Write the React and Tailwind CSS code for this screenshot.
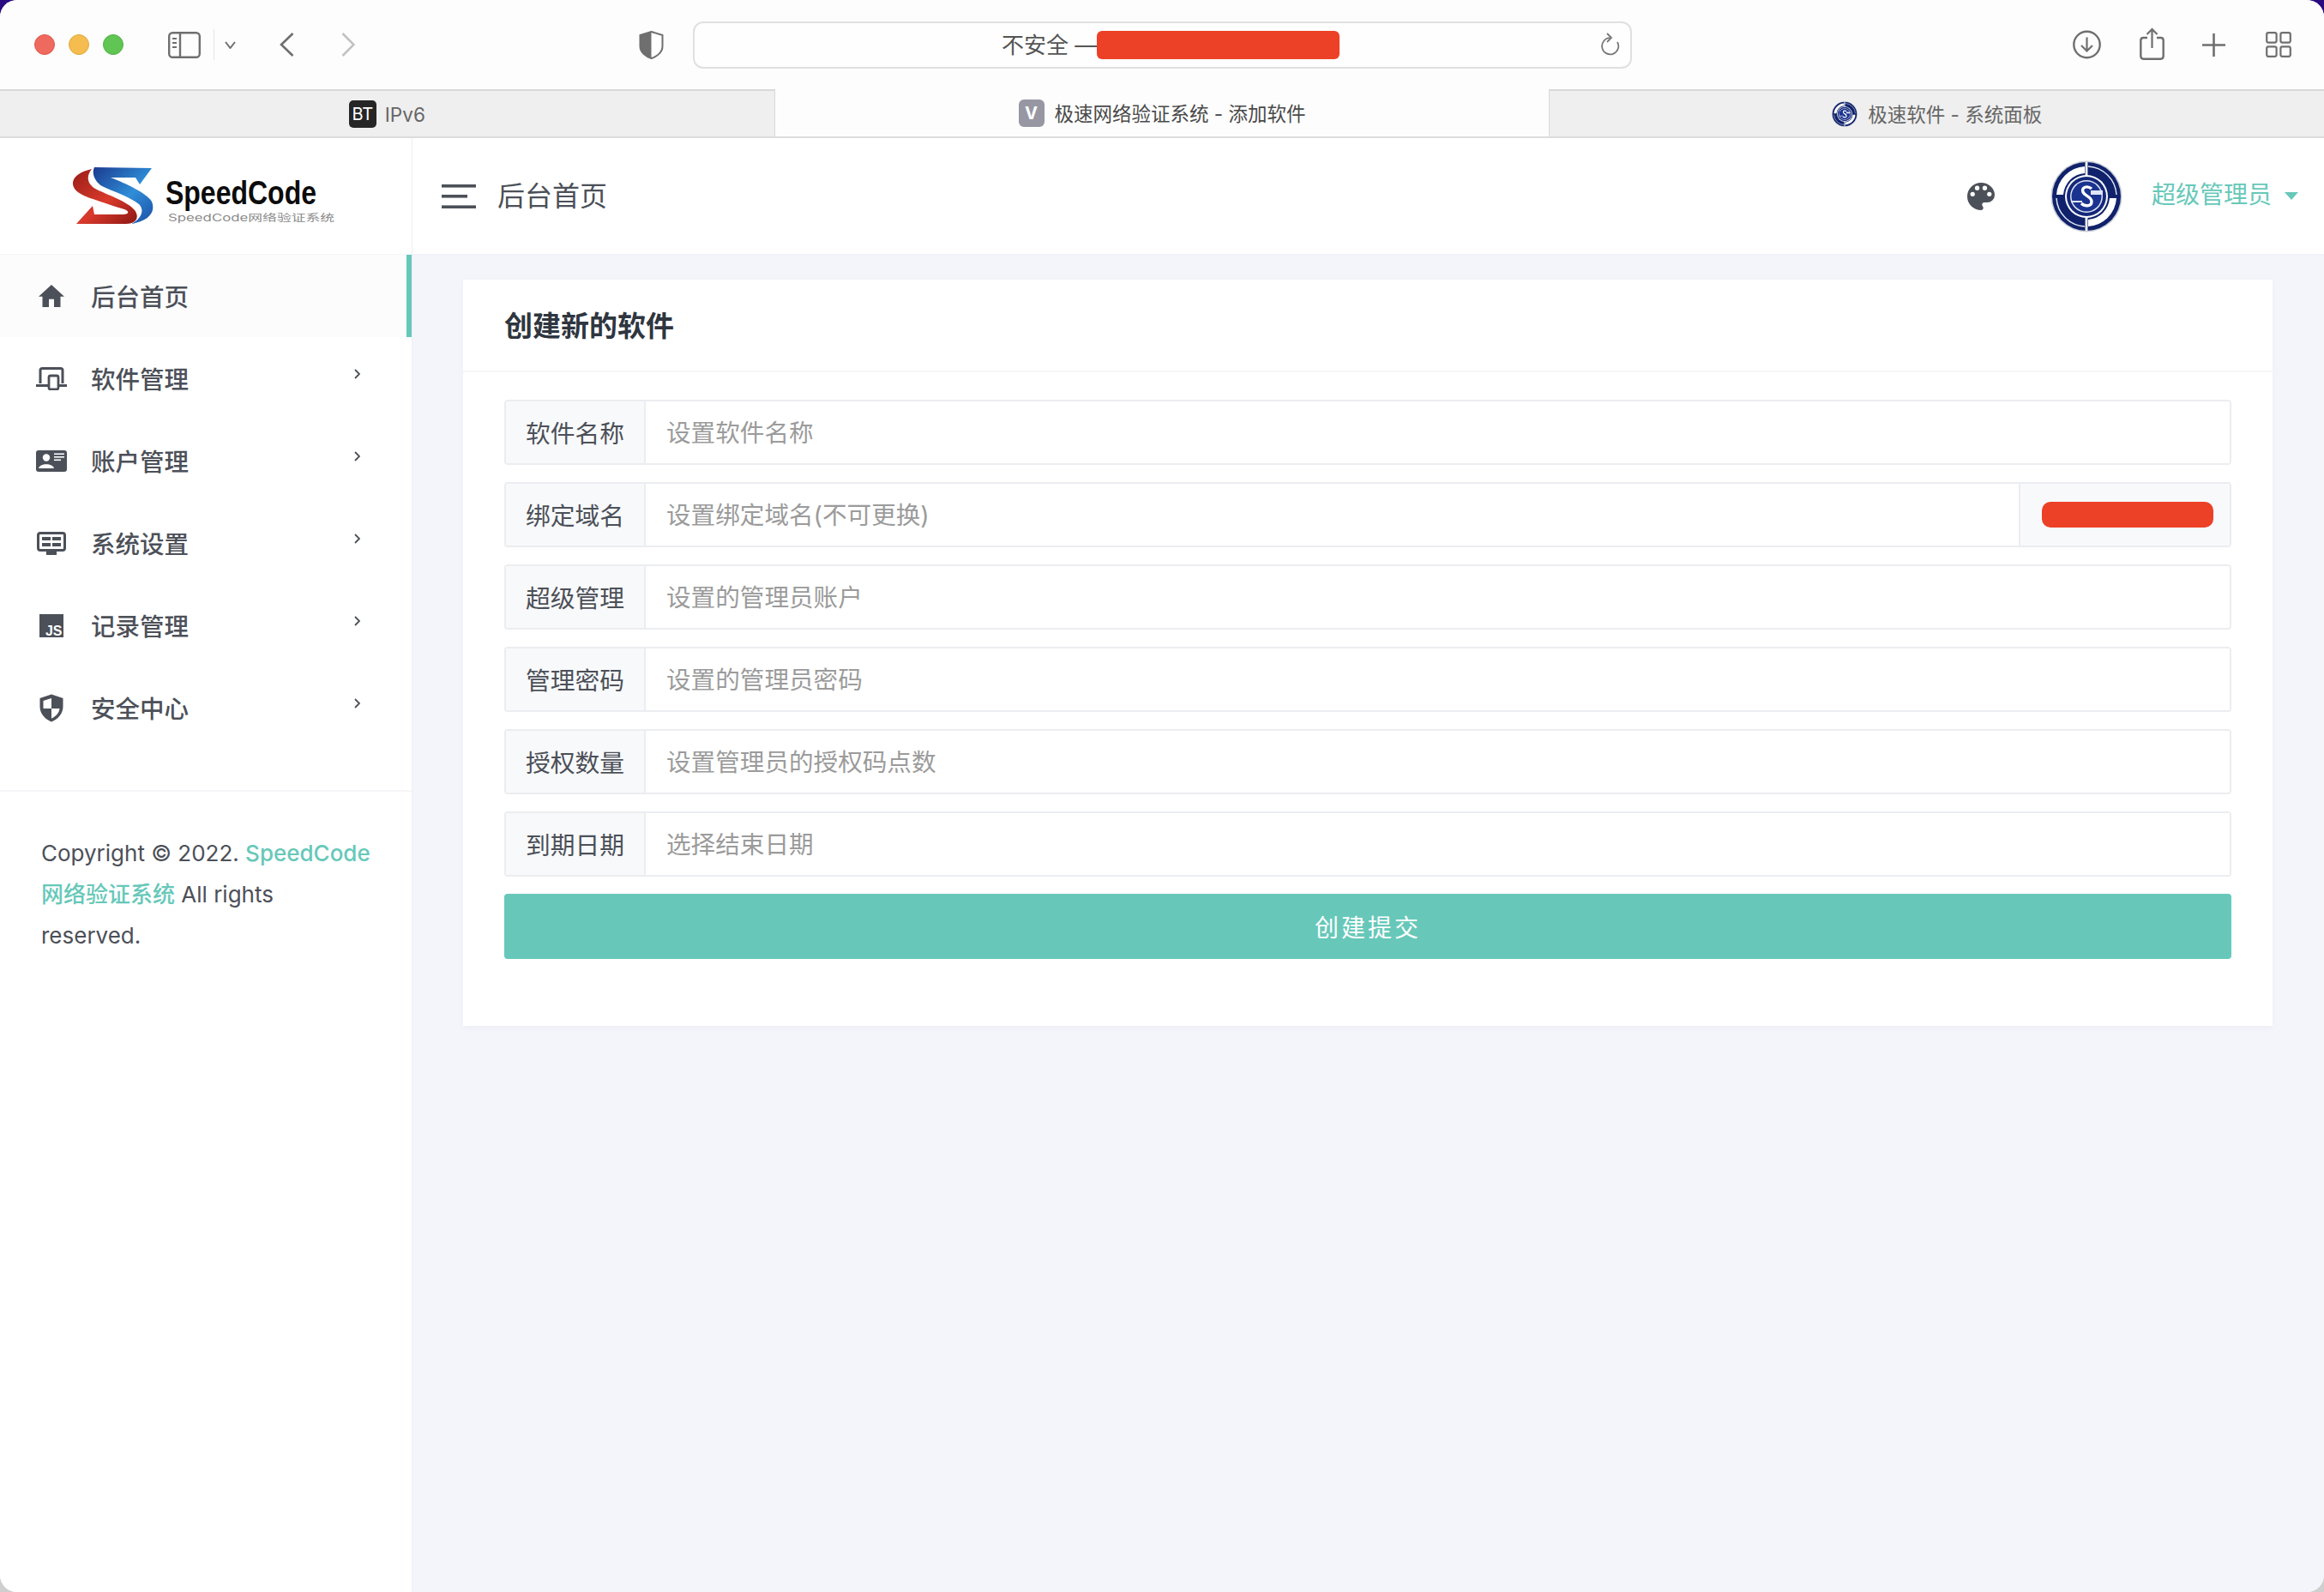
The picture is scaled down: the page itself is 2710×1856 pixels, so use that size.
import React from 'react';

const Logo = () => (
    <svg width="305" height="70" viewBox="0 0 305 70" className="block">
        <defs>
            <linearGradient id="blueS" x1="0" y1="0" x2="1" y2="1">
                <stop offset="0" stopColor="#1b3a8f" />
                <stop offset="0.55" stopColor="#2f8ed8" />
                <stop offset="1" stopColor="#1c4fa6" />
            </linearGradient>
            <linearGradient id="redS" x1="0" y1="0" x2="1" y2="1">
                <stop offset="0" stopColor="#9a1d17" />
                <stop offset="0.55" stopColor="#d93a2c" />
                <stop offset="1" stopColor="#8d1712" />
            </linearGradient>
        </defs>
        <path fill="url(#redS)" d="M22,2 C9,5 -1,11 0,20 C1,28 10,32 20,36 C35,41 50,46 60,49 C66,51 66,55 58,55 L25,55 L23,45 L4,66 L62,66 C74,66 78,58 72,50 C64,40 40,32 28,26 C18,21 14,12 22,2 Z" />
        <path fill="url(#blueS)" d="M25,0 L92,1 L78,20 L73,12 L44,12 C62,19 86,30 92,40 C97,52 88,63 68,66 C80,60 84,50 77,43 C66,34 44,27 34,22 C27,18 21,8 25,0 Z" />
        <text x="108" y="35.2" transform="scale(1 1.22)" fontFamily="'Liberation Sans', sans-serif" fontWeight="700" fontSize="32" fill="#0c0c0c">SpeedCode</text>
        <text x="111" y="92.6" transform="scale(1 0.68)" fontFamily="Inter, 'Noto Sans CJK SC', sans-serif" fontSize="16.8" fill="#8a8a8a">SpeedCode网络验证系统</text>
    </svg>
);

const Avatar = ({ size }) => (
    <svg width={size} height={size} viewBox="0 0 84 84" className="block shrink-0">
        <circle cx="42" cy="42" r="41.5" fill="#c9ccd6" />
        <circle cx="42" cy="42" r="40" fill="#10226b" />
        <path d="M40,7 A35,35 0 0 0 7,40 H15 A27,27 0 0 1 40,15 Z" fill="#fff" />
        <path d="M44,77 A35,35 0 0 0 77,44 H69 A27,27 0 0 1 44,69 Z" fill="#fff" />
        <path d="M44,7 A35,35 0 0 1 77,40" fill="none" stroke="#dfe4f2" strokeWidth="1.5" />
        <path d="M40,77 A35,35 0 0 1 7,44" fill="none" stroke="#dfe4f2" strokeWidth="1.5" />
        <rect x="40.6" y="2" width="2.8" height="80" fill="#fff" />
        <circle cx="42" cy="42" r="25" fill="#fff" />
        <circle cx="42" cy="42" r="23" fill="#14287a" />
        <circle cx="42" cy="42" r="19" fill="#dfe5f3" />
        <circle cx="42" cy="42" r="17.5" fill="#1a3390" />
        <rect x="24" y="47" width="13" height="2" fill="#dfe5f3" />
        <rect x="47" y="35" width="14" height="5" fill="#dfe5f3" />
        <path d="M48,33 C43,29 36,31 38,37 C40,42 48,42 48,48 C48,54 40,54 36,50" stroke="#fff" strokeWidth="3.4" fill="none" />
    </svg>
);

const Shield = () => (
    <svg width="29" height="33" viewBox="0 0 29 33" className="block shrink-0">
        <path d="M14.5,1 L27.5,5 V18 C27.5,25 21,30 14.5,32 C8,30 1.5,25 1.5,18 V5 Z" fill="#fff" stroke="#6f6f6f" strokeWidth="2" />
        <path d="M14.5,1 V32 C8,30 1.5,25 1.5,18 V5 Z" fill="#6f6f6f" />
    </svg>
);

const NavIcon = ({ name }) => {
    if (name === 'home') {
        return (
            <svg width="30" height="26" viewBox="2 3 20 17" fill="#4c5058" preserveAspectRatio="none">
                <path d="M10,20V14H14V20H19V12H22L12,3L2,12H5V20H10Z" />
            </svg>
        );
    }
    if (name === 'devices') {
        return (
            <svg width="36" height="27" viewBox="0 0 36 27" fill="none">
                <path d="M5,19 V3.5 C5,2 6,1.5 7.5,1.5 H28.5 C30,1.5 31,2 31,3.5 V19" stroke="#4c5058" strokeWidth="3" />
                <rect x="0" y="20" width="36" height="3" fill="#4c5058" />
                <rect x="15" y="10" width="11" height="16" rx="2" fill="#fff" stroke="#4c5058" strokeWidth="2.8" />
            </svg>
        );
    }
    if (name === 'card') {
        return (
            <svg width="36" height="27" viewBox="0 0 36 27">
                <rect width="36" height="25" y="1" rx="3" fill="#4c5058" />
                <circle cx="12" cy="9.5" r="4.2" fill="#fff" />
                <path d="M3,22 C4,15.5 20,15.5 21,22 Z" fill="#fff" />
                <rect x="21" y="4.5" width="12" height="1.6" fill="#fff" />
                <rect x="21" y="8" width="12" height="1.6" fill="#fff" />
                <rect x="21" y="11.5" width="8" height="1.6" fill="#fff" />
            </svg>
        );
    }
    if (name === 'monitor') {
        return (
            <svg width="34" height="27" viewBox="0 0 34 27" fill="none">
                <rect x="1.5" y="1.5" width="31" height="20" rx="2.5" stroke="#4c5058" strokeWidth="3" />
                <rect x="6" y="6" width="10" height="4" fill="#4c5058" />
                <rect x="18" y="6" width="10" height="4" fill="#4c5058" />
                <rect x="6" y="13" width="10" height="4" fill="#4c5058" />
                <rect x="18" y="13" width="10" height="4" fill="#4c5058" />
                <rect x="11" y="23" width="12" height="4" fill="#4c5058" />
            </svg>
        );
    }
    if (name === 'js') {
        return (
            <svg width="28" height="27" viewBox="0 0 28 27">
                <rect width="28" height="27" fill="#4c5058" />
                <text x="26.5" y="24.5" textAnchor="end" fontFamily="'Liberation Sans', sans-serif" fontWeight="700" fontSize="16" fill="#fff">JS</text>
            </svg>
        );
    }
    return (
        <svg width="28" height="33" viewBox="0 0 28 33">
            <path d="M14,0.5 L27.5,5 V15 C27.5,23 21,30 14,32.5 C7,30 0.5,23 0.5,15 V5 Z" fill="#4c5058" />
            <path d="M14,5 V17 H4.5 V8 Z" fill="#fff" />
            <path d="M14,17 H23.5 C23,22 19,26.5 14,28.5 Z" fill="#fff" />
        </svg>
    );
};

const navItems = [
    { name: 'home', label: '后台首页', active: true },
    { name: 'devices', label: '软件管理' },
    { name: 'card', label: '账户管理' },
    { name: 'monitor', label: '系统设置' },
    { name: 'js', label: '记录管理' },
    { name: 'shield', label: '安全中心' },
];

const fields = [
    { label: '软件名称', placeholder: '设置软件名称' },
    { label: '绑定域名', placeholder: '设置绑定域名(不可更换)', redacted: true },
    { label: '超级管理', placeholder: '设置的管理员账户' },
    { label: '管理密码', placeholder: '设置的管理员密码' },
    { label: '授权数量', placeholder: '设置管理员的授权码点数' },
    { label: '到期日期', placeholder: '选择结束日期' },
];

const Toolbar = () => (
    <div className="flex h-[104px] shrink-0 items-center bg-[#fdfdfd]">
        <div className="ml-10 flex gap-4">
            <div className="h-6 w-6 rounded-full border border-[#e2574c] bg-[#ee6a5f]" />
            <div className="h-6 w-6 rounded-full border border-[#e0a93c] bg-[#f5bd4f]" />
            <div className="h-6 w-6 rounded-full border border-[#52b043] bg-[#61c554]" />
        </div>
        <svg width="38" height="31" viewBox="0 0 38 31" fill="none" className="ml-[52px] shrink-0">
            <rect x="1.2" y="1.2" width="35.6" height="28.6" rx="4" stroke="#6f6f6f" strokeWidth="2.4" />
            <line x1="14" y1="1" x2="14" y2="30" stroke="#6f6f6f" strokeWidth="2.4" />
            <path d="M5,8 H10 M5,13 H10 M5,18 H10" stroke="#6f6f6f" strokeWidth="2" />
        </svg>
        <div className="ml-[15px] h-9 w-px bg-[#e4e4e4]" />
        <svg width="13" height="9" viewBox="0 0 13 9" fill="none" className="ml-3 shrink-0">
            <path d="M1,1 L6.5,8 L12,1" stroke="#6f6f6f" strokeWidth="2" />
        </svg>
        <svg width="17" height="28" viewBox="0 0 17 28" fill="none" className="ml-[51px] shrink-0">
            <path d="M15.5,1 L2,14 L15.5,27" stroke="#6f6f6f" strokeWidth="2.6" />
        </svg>
        <svg width="16" height="28" viewBox="0 0 16 28" fill="none" className="ml-[55px] shrink-0">
            <path d="M1.5,1 L14.5,14 L1.5,27" stroke="#c2c2c2" strokeWidth="2.6" />
        </svg>
        <div className="ml-[331px]">
            <Shield />
        </div>
        <div className="ml-[34px] flex h-[55px] w-[1095px] shrink-0 items-center rounded-[12px] border-2 border-[#e0e0e0] bg-[#fefefe] pl-[358px] pr-3">
            <span className="whitespace-nowrap pt-[2px] text-[26px] leading-none text-[#555]">不安全 —</span>
            <div className="h-[33px] w-[283px] rounded-[6px] bg-[#ec4126]" />
            <svg width="23" height="28" viewBox="0 0 23 28" fill="none" className="ml-auto shrink-0">
                <path d="M20,11 A9.6,9.6 0 1 1 11.5,6.2" stroke="#777" strokeWidth="1.8" />
                <path d="M8,1 L13,6 L8,11" stroke="#777" strokeWidth="1.8" />
            </svg>
        </div>
        <svg width="33" height="34" viewBox="0 0 33 34" fill="none" className="ml-[514px] shrink-0">
            <circle cx="16.5" cy="17" r="15.2" stroke="#6f6f6f" strokeWidth="2.4" />
            <path d="M16.5,8.5 V24.5 M10,18 L16.5,24.5 L23,18" stroke="#6f6f6f" strokeWidth="2.2" />
        </svg>
        <svg width="29" height="38" viewBox="0 0 29 38" fill="none" className="mb-[3px] ml-[45px] shrink-0">
            <path d="M9,12 H4.5 C2.5,12 1.3,13.2 1.3,15.2 V33 C1.3,35.5 2.5,36.7 4.5,36.7 H24.5 C26.5,36.7 27.7,35.5 27.7,33 V15.2 C27.7,13.2 26.5,12 24.5,12 H20" stroke="#6f6f6f" strokeWidth="2.4" />
            <path d="M14.5,24 V2 M8.5,8 L14.5,2 L20.5,8" stroke="#6f6f6f" strokeWidth="2.2" />
        </svg>
        <svg width="27" height="27" viewBox="0 0 27 27" fill="none" className="ml-11 shrink-0">
            <path d="M13.5,0 V27 M0,13.5 H27" stroke="#6f6f6f" strokeWidth="2.6" />
        </svg>
        <svg width="30" height="30" viewBox="0 0 30 30" fill="none" className="ml-[47px] shrink-0">
            <rect x="1.2" y="1.2" width="11.4" height="11.4" rx="2" stroke="#6f6f6f" strokeWidth="2.2" />
            <rect x="17.4" y="1.2" width="11.4" height="11.4" rx="2" stroke="#6f6f6f" strokeWidth="2.2" />
            <rect x="1.2" y="17.4" width="11.4" height="11.4" rx="2" stroke="#6f6f6f" strokeWidth="2.2" />
            <rect x="17.4" y="17.4" width="11.4" height="11.4" rx="2" stroke="#6f6f6f" strokeWidth="2.2" />
        </svg>
    </div>
);

const TabStrip = () => (
    <div className="flex h-[57px] shrink-0 text-[22.5px] text-[#666]">
        <div className="flex flex-1 items-center justify-center gap-[10px] border-y-2 border-t-[#d8d8d8] border-b-[#dcdcdc] bg-[#efefef]">
            <div className="flex h-8 w-8 items-center justify-center rounded-[5px] bg-[#262626] text-[20px] leading-none text-white">BT</div>
            <span className="pt-[2px]">IPv6</span>
        </div>
        <div className="flex flex-1 items-center justify-center gap-3 border-x border-b-2 border-x-[#d8d8d8] border-b-[#dcdcdc] bg-[#fdfdfd] text-[#4a4a4a]">
            <div className="flex h-8 w-[30px] items-center justify-center rounded-[6px] bg-[#9697a3] text-[20px] font-bold leading-none text-white">V</div>
            <span className="pt-[2px]">极速网络验证系统 - 添加软件</span>
        </div>
        <div className="flex flex-1 items-center justify-center gap-3 border-y-2 border-t-[#d8d8d8] border-b-[#dcdcdc] bg-[#efefef]">
            <Avatar size={30} />
            <span className="pt-[2px]">极速软件 - 系统面板</span>
        </div>
    </div>
);

const Sidebar = () => (
    <aside className="flex w-[481px] shrink-0 flex-col border-r border-[#eeeff3] bg-white">
        <div className="flex h-[135px] shrink-0 items-start pl-[85px] pt-[34px]">
            <Logo />
        </div>
        <nav className="border-t border-[#f6f6f8]">
            {navItems.map((item) => (
                <div
                    key={item.name}
                    className={`flex h-[96px] items-center ${item.active ? 'border-r-[6px] border-[#67c8b9] bg-[#fcfcfd]' : ''}`}
                >
                    <div className="ml-[42px] flex w-9 justify-center">
                        <NavIcon name={item.name} />
                    </div>
                    <span className="ml-7 w-[114px] whitespace-nowrap pt-1 text-[28.5px] font-medium leading-none text-[#4c5058]">{item.label}</span>
                    {!item.active && (
                        <svg width="7" height="12" viewBox="0 0 7 12" fill="none" className="mb-[10px] ml-[193px]">
                            <path d="M1,1 L6,6 L1,11" stroke="#4c5058" strokeWidth="1.8" />
                        </svg>
                    )}
                </div>
            ))}
        </nav>
        <div className="mt-[48px] border-t-2 border-[#f6f6f8] px-12 pt-[48px] text-[26px] leading-[48px] text-[#4c5058]">
            Copyright © 2022. <span className="font-medium text-[#67c8b9]">SpeedCode</span>
            <br />
            <span className="font-medium text-[#67c8b9]">网络验证系统</span> All rights
            <br />
            reserved.
        </div>
    </aside>
);

const Header = () => (
    <header className="flex h-[135px] shrink-0 items-center bg-white shadow-[0_1px_2px_rgba(0,0,0,0.02)]">
        <svg width="40" height="28" viewBox="0 0 40 28" className="ml-[34px] shrink-0" fill="#4c5058">
            <rect width="40" height="3.6" />
            <rect y="12" width="30" height="3.6" />
            <rect y="24.4" width="40" height="3.6" />
        </svg>
        <span className="ml-[25px] text-[32px] leading-none text-[#4c5058]">后台首页</span>
        <svg width="32" height="32" viewBox="3 3 18 18" fill="#4c5058" className="ml-auto shrink-0">
            <path d="M17.5,12A1.5,1.5 0 0,1 16,10.5A1.5,1.5 0 0,1 17.5,9A1.5,1.5 0 0,1 19,10.5A1.5,1.5 0 0,1 17.5,12M14.5,8A1.5,1.5 0 0,1 13,6.5A1.5,1.5 0 0,1 14.5,5A1.5,1.5 0 0,1 16,6.5A1.5,1.5 0 0,1 14.5,8M9.5,8A1.5,1.5 0 0,1 8,6.5A1.5,1.5 0 0,1 9.5,5A1.5,1.5 0 0,1 11,6.5A1.5,1.5 0 0,1 9.5,8M6.5,12A1.5,1.5 0 0,1 5,10.5A1.5,1.5 0 0,1 6.5,9A1.5,1.5 0 0,1 8,10.5A1.5,1.5 0 0,1 6.5,12M12,3A9,9 0 0,0 3,12A9,9 0 0,0 12,21A1.5,1.5 0 0,0 13.5,19.5C13.5,19.11 13.35,18.76 13.11,18.5C12.88,18.23 12.73,17.88 12.73,17.5A1.5,1.5 0 0,1 14.23,16H16A5,5 0 0,0 21,11C21,6.58 16.97,3 12,3Z" />
        </svg>
        <div className="ml-[65px]">
            <Avatar size={84} />
        </div>
        <span className="mb-[3px] ml-[34px] text-[28px] leading-none text-[#67c8b9]">超级管理员</span>
        <div className="ml-[15px] mr-[30px] h-0 w-0 border-x-[8px] border-t-[9px] border-x-transparent border-t-[#67c8b9]" />
    </header>
);

const FormRow = ({ label, placeholder, redacted }) => (
    <div className="flex h-[76px] overflow-hidden rounded-[4px] border-2 border-[#ebedf0]">
        <div className="flex w-[163px] shrink-0 items-center justify-center border-r-2 border-[#ebedf0] bg-[#f8f9fb] pt-[3px] text-[28.8px] text-[#4c5058]">
            {label}
        </div>
        <input
            className="min-w-0 flex-1 bg-white pl-6 pt-[3px] text-[28.6px] text-[#4c5058] outline-none placeholder:text-[#9b9b9b]"
            placeholder={placeholder}
        />
        {redacted && (
            <div className="flex w-[246px] shrink-0 items-center border-l-2 border-[#ebedf0] bg-[#f8f9fb] pl-[25px]">
                <div className="h-[30px] w-[200px] rounded-[10px] bg-[#ec4126]" />
            </div>
        )}
    </div>
);

const App = () => (
    <div className="relative h-[1856px] w-[2710px] overflow-hidden bg-[linear-gradient(#2a0a80_50%,#cfcfcf_50%)] font-[Inter,'Noto_Sans_CJK_SC',sans-serif]">
        <div className="flex h-full flex-col overflow-hidden rounded-[20px] bg-white">
            <Toolbar />
            <TabStrip />
            <div className="flex min-h-0 flex-1">
                <Sidebar />
                <div className="flex min-w-0 flex-1 flex-col bg-[#f4f5fa]">
                    <Header />
                    <main className="px-[59px] pt-[30px]">
                        <div className="h-[870px] w-[2110px] bg-white shadow-[0_2px_8px_rgba(0,0,0,0.03)]">
                            <div className="flex h-[108px] items-center border-b-2 border-[#f6f6f8] pl-12 pt-[3px] text-[33px] font-semibold leading-none text-[#2f3640]">
                                创建新的软件
                            </div>
                            <div className="flex flex-col gap-5 px-12 pt-8">
                                {fields.map((field) => (
                                    <FormRow key={field.label} {...field} />
                                ))}
                                <button className="h-[76px] rounded-[4px] bg-[#67c8b9] pt-[3px] text-[28px] tracking-[3px] text-white">
                                    创建提交
                                </button>
                            </div>
                        </div>
                    </main>
                </div>
            </div>
        </div>
    </div>
);

export default App;
